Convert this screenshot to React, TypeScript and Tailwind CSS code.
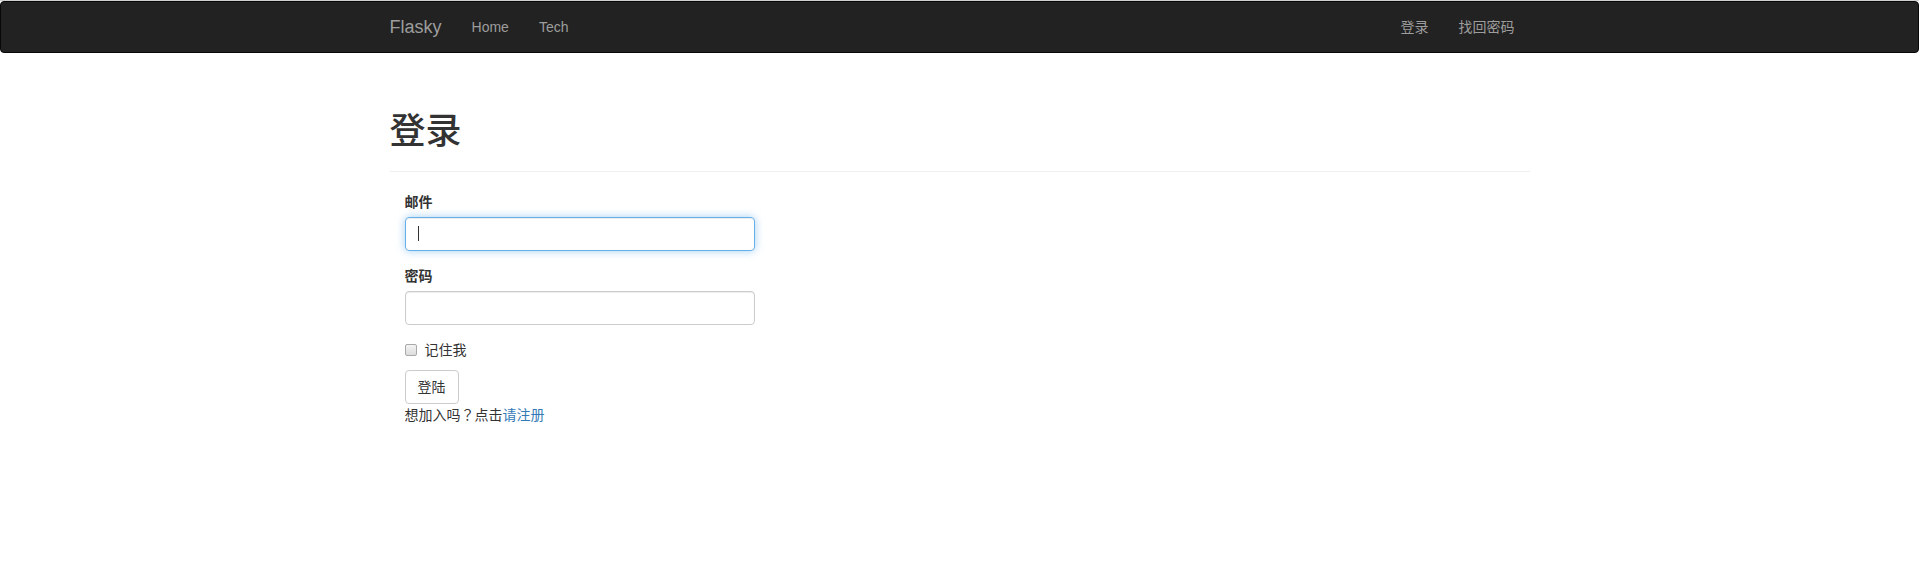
const Navbar = () => {
  return (
    <div className="border-t border-[#cfcfcf]">
      <nav className="h-[52px] rounded-[4px] border border-[#080808] bg-[#222]">
        <div className="mx-auto flex w-[1170px] justify-between px-[15px]">
          <div className="flex">
            <a className="-ml-[15px] block h-[50px] px-[15px] py-[15px] text-[18px] leading-[20px] text-[#9d9d9d]">
              Flasky
            </a>
            <ul className="flex">
              <li>
                <a className="block px-[15px] py-[15px] text-[14px] leading-[20px] text-[#9d9d9d]">
                  Home
                </a>
              </li>
              <li>
                <a className="block px-[15px] py-[15px] text-[14px] leading-[20px] text-[#9d9d9d]">
                  Tech
                </a>
              </li>
            </ul>
          </div>
          <ul className="flex">
            <li>
              <a className="block px-[15px] py-[15px] text-[14px] leading-[20px] text-[#9d9d9d]">
                登录
              </a>
            </li>
            <li>
              <a className="block px-[15px] py-[15px] text-[14px] leading-[20px] text-[#9d9d9d]">
                找回密码
              </a>
            </li>
          </ul>
        </div>
      </nav>
    </div>
  );
};

const LoginForm = () => {
  return (
    <div className="w-[380px] px-[15px]">
      <div className="mb-[15px]">
        <label className="mb-[5px] block text-[14px] font-bold leading-[20px]">
          邮件
        </label>
        <div className="relative">
          <input
            type="text"
            className="block h-[34px] w-full rounded-[4px] border border-[#66afe9] px-[12px] py-[6px] text-[14px] text-[#555] shadow-[inset_0_1px_1px_rgba(0,0,0,0.075),0_0_8px_rgba(102,175,233,0.6)] outline-none"
          />
          <span className="absolute left-[13px] top-[9px] h-[15px] w-px bg-[#333]" />
        </div>
      </div>
      <div className="mb-[15px]">
        <label className="mb-[5px] block text-[14px] font-bold leading-[20px]">
          密码
        </label>
        <input
          type="password"
          className="block h-[34px] w-full rounded-[4px] border border-[#ccc] px-[12px] py-[6px] text-[14px] text-[#555] shadow-[inset_0_1px_1px_rgba(0,0,0,0.075)] outline-none"
        />
      </div>
      <div className="mb-[10px] flex h-[20px] items-center">
        <span className="mr-[8px] block h-[12px] w-[12px] rounded-[2px] border border-[#a9a9a9] bg-gradient-to-b from-[#f4f4f4] to-[#dcdcdc]" />
        <span className="text-[14px] leading-[20px]">记住我</span>
      </div>
      <button className="block h-[34px] rounded-[4px] border border-[#ccc] bg-white px-[12px] text-[14px] leading-[20px] text-[#333]">
        登陆
      </button>
      <p className="text-[14px] leading-[20px]">
        想加入吗
        <span className="font-['Noto_Sans_CJK_TC',sans-serif]">？</span>
        点击<a className="text-[#337ab7]">请注册</a>
      </p>
    </div>
  );
};

const App = () => {
  return (
    <div className="min-h-[562px] bg-white font-['Liberation_Sans','Noto_Sans_CJK_SC',sans-serif] text-[14px] text-[#333]">
      <Navbar />
      <div className="mx-auto w-[1170px] px-[15px] pt-[20px]">
        <div className="mb-[20px] mt-[39px] border-b border-[#eee] pb-[9px]">
          <h1 className="mb-[10px] text-[36px] font-medium leading-[39.6px]">
            登录
          </h1>
        </div>
        <LoginForm />
      </div>
    </div>
  );
};

export default App;
